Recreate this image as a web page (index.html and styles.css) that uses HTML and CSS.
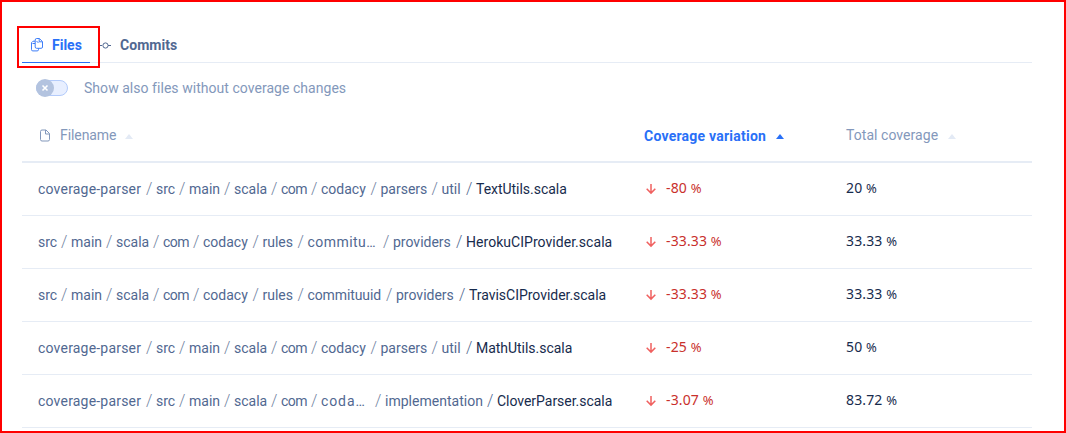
FILE: index.html
```
<!DOCTYPE html>
<html lang="en"><head><meta charset="utf-8"><title>Coverage files</title><link rel="stylesheet" href="styles.css"></head>
<body>
<svg class="defs" width="0" height="0"><defs><symbol id="down" viewBox="0 0 12 12"><path d="M6 1v9M1.7 5.8 6 10.1l4.3-4.3" fill="none" stroke="currentColor" stroke-width="1.5"/></symbol></defs></svg>
<main class="panel">
<nav class="tabs">
<a class="tab active"><svg width="14" height="16" viewBox="0 0 14 16"><g fill="none" stroke="currentColor" stroke-width=".9" stroke-linejoin="round"><path d="M5 4.2H3L1.5 5.700V12.600q0 1.300 1.300 1.300H7.200q1.300 0 1.300-1.300V11.500M5.200 3v6.900q0 1.400 1.300 1.400h4.700q1.300 0 1.300-1.300V4.600L9.400 1.500H6.700Q5.200 1.500 5.200 3Z"/><path d="M9.200 1.800V4.800h3M6.500 4L8.500 6M5 6.500H2.500"/></g></svg><span class="tab-files">Files</span></a>
<a class="tab"><svg width="12" height="8" viewBox="0 0 12 8"><path d="M0 4.500h3M9 4.500h3" stroke="currentColor"/><circle cx="6.500" cy="4.500" r="2.600" fill="none" stroke="currentColor"/></svg><span class="tab-commits">Commits</span></a>
<span class="focus-box"></span>
</nav>
<div class="filter"><span class="switch"><span class="knob"><svg width="8" height="8" viewBox="0 0 8 8"><path d="M1.5 1.5l5 5M6.5 1.5l-5 5" stroke="#fff" stroke-width="1.6"/></svg></span></span><span class="filter-text">Show also files without coverage changes</span></div>
<section class="table">
<div class="row head"><div class="name"><svg width="12" height="14" viewBox="0 0 12 14"><path d="M4 2h4L11.500 5.500v6q0 1.500-1.500 1.500H4Q2.500 13 2.500 11.500V3.500Q2.500 2 4 2ZM7.500 2V6H11.500" fill="none" stroke="currentColor"/></svg><span class="h-name">Filename</span><i class="sort"></i></div><div class="variation sorted"><span class="h-var">Coverage variation</span><i class="sort"></i></div><div class="total"><span class="h-total">Total coverage</span><i class="sort"></i></div></div>
<div class="row"><div class="name"><span class="coverage">coverage-parser</span><b>/</b><span class="src">src</span><b>/</b><span class="main">main</span><b>/</b><span class="scala">scala</span><b>/</b><span class="com">com</span><b>/</b><span class="codacy">codacy</span><b>/</b><span class="parsers">parsers</span><b>/</b><span class="util">util</span><b class="last">/</b><strong>TextUtils.scala</strong></div><div class="variation"><svg width="12" height="12"><use href="#down"/></svg><span>-80 <small>%</small></span></div><div class="total"><span>20 <small>%</small></span></div></div>
<div class="row"><div class="name"><span class="src">src</span><b>/</b><span class="main">main</span><b>/</b><span class="scala">scala</span><b>/</b><span class="com">com</span><b>/</b><span class="codacy">codacy</span><b>/</b><span class="rules">rules</span><b>/</b><span class="commitu">commitu…</span><b>/</b><span class="providers">providers</span><b class="last">/</b><strong class="heroku">HerokuCIProvider.scala</strong></div><div class="variation"><svg width="12" height="12"><use href="#down"/></svg><span>-33.33 <small>%</small></span></div><div class="total"><span>33.33 <small>%</small></span></div></div>
<div class="row"><div class="name"><span class="src">src</span><b>/</b><span class="main">main</span><b>/</b><span class="scala">scala</span><b>/</b><span class="com">com</span><b>/</b><span class="codacy">codacy</span><b>/</b><span class="rules">rules</span><b>/</b><span class="commituuid">commituuid</span><b>/</b><span class="providers">providers</span><b class="last">/</b><strong>TravisCIProvider.scala</strong></div><div class="variation"><svg width="12" height="12"><use href="#down"/></svg><span>-33.33 <small>%</small></span></div><div class="total"><span>33.33 <small>%</small></span></div></div>
<div class="row"><div class="name"><span class="coverage">coverage-parser</span><b>/</b><span class="src">src</span><b>/</b><span class="main">main</span><b>/</b><span class="scala">scala</span><b>/</b><span class="com">com</span><b>/</b><span class="codacy">codacy</span><b>/</b><span class="parsers">parsers</span><b>/</b><span class="util">util</span><b class="last">/</b><strong>MathUtils.scala</strong></div><div class="variation"><svg width="12" height="12"><use href="#down"/></svg><span>-25 <small>%</small></span></div><div class="total"><span>50 <small>%</small></span></div></div>
<div class="row"><div class="name"><span class="coverage">coverage-parser</span><b>/</b><span class="src">src</span><b>/</b><span class="main">main</span><b>/</b><span class="scala">scala</span><b>/</b><span class="com">com</span><b>/</b><span class="coda">coda…</span><b>/</b><span class="implementation">implementation</span><b class="last">/</b><strong>CloverParser.scala</strong></div><div class="variation"><svg width="12" height="12"><use href="#down"/></svg><span>-3.07 <small>%</small></span></div><div class="total"><span>83.72 <small>%</small></span></div></div>
</section>
</main></body></html>
```
FILE: styles.css
```
* { box-sizing: border-box; }
body { margin: 0; background: #fff; font: 14px/20px Roboto, sans-serif; color: #516891; }
.defs { display: block; }
.panel { width: 1066px; height: 433px; border: 2px solid #f00; padding: 26px 32px 0 20px; overflow: hidden; }
svg { display: block; flex: none; }
.tabs { position: relative; display: flex; height: 35px; border-bottom: 1px solid #e6ecf5; }
.tab { display: flex; align-items: center; height: 35px; padding: 0 8px; font-weight: 700; white-space: nowrap; border-bottom: 1px solid transparent; }
.active { width: 68px; color: #2970f7; border-bottom-color: #2970f7; gap: 8px; }
.tab + .tab { padding-left: 9px; gap: 9px; }
.tab-files { letter-spacing: 0; }
.tab-commits { letter-spacing: .05px; }
.focus-box { position: absolute; left: -5px; top: -2px; width: 83px; height: 42px; border: 2px solid #f00; }
.filter { display: flex; align-items: center; height: 50px; padding-left: 14px; gap: 16px; color: #8398bb; }
.switch { display: flex; width: 32px; height: 16px; align-items: center; background: #e8efff; border: 1px solid #b3cbfb; border-radius: 8px; }
.knob { display: grid; place-items: center; width: 18px; height: 18px; flex: none; margin-left: -1px; background: #b3c3df; border-radius: 50%; }
.filter-text { letter-spacing: .04px; }
.row { display: grid; grid-template-columns: 606px 202px 202px; height: 53px; border-bottom: 1px solid #e6ecf5; align-items: center; white-space: nowrap; }
.head { height: 50px; border-bottom-width: 2px; padding-bottom: 4px; color: #8398bb; }
.row > div { display: flex; align-items: center; padding-left: 16px; }
.name span { flex: none; letter-spacing: 0; }
.name b { width: 14px; padding-left: 4px; flex: none; font-size: 16px; font-weight: 300; color: #71829f; }
.name strong { color: #172b4d; font-weight: 400; letter-spacing: -.03px; }
.name .heroku { letter-spacing: .04px; }
.name .last { color: #516891; }
.name .coverage { width: 104px; letter-spacing: .2px; }
.src { width: 19px; }
.main { width: 31px; }
.scala { width: 33px; }
.name .com { width: 26px; letter-spacing: -.5px; }
.codacy { width: 45.5px; }
.parsers { width: 47px; }
.util { width: 20.5px; }
.rules { width: 31px; }
.name .commitu { width: 71.500px; letter-spacing: .45px; }
.name .commituuid { width: 74.500px; letter-spacing: -.1px; }
.providers { width: 59px; }
.name .coda { width: 50px; letter-spacing: .9px; }
.name .implementation { width: 98px; letter-spacing: .02px; }
.row .variation { color: #c9302c; font-family: "Noto Sans", sans-serif; gap: 9px; padding-left: 17px; letter-spacing: .12px; }
.variation > span, .total > span { position: relative; top: -1px; }
.variation svg { color: #f0605f; }
.row .total { font-family: "Noto Sans", sans-serif; color: #172b4d; letter-spacing: .12px; }
small { font-size: 13px; }
.head .name { gap: 9px; }
.head .name span { margin-left: 1px; letter-spacing: -.08px; }
.head .variation { color: #2970f7; font: 700 14px/20px Roboto, sans-serif; padding-left: 16px; letter-spacing: .23px; gap: 10px; }
.head .variation > span { top: 1px; }
.head .total { color: #8398bb; font-family: Roboto, sans-serif; gap: 10px; }
.head .total > span { top: 0; letter-spacing: .05px; }
.sort { border: 4px solid transparent; border-top: 0; border-bottom: 5px solid #e3eaf5; margin-top: 2px; }
.sorted .sort { border-bottom-color: #2970f7; }
```
